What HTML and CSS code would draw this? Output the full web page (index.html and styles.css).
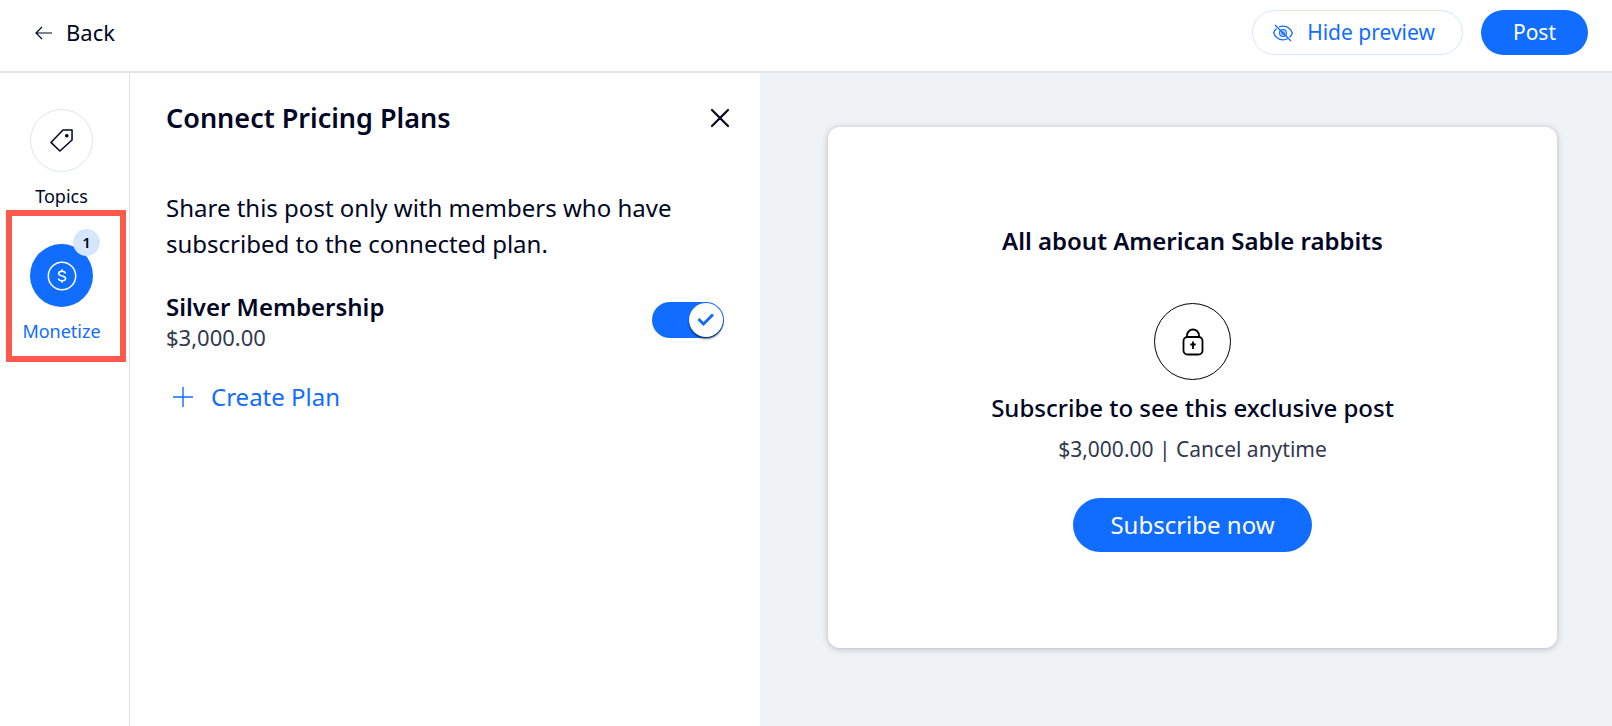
FILE: index.html
```html
<!DOCTYPE html>
<html lang="en">
<head>
    <meta charset="UTF-8">
    <meta name="viewport" content="width=device-width, initial-scale=1.0">
    <title>Connect Pricing Plans</title>
    <link rel="stylesheet" href="styles.css">
</head>
<body>
    <header class="topbar">
        <a class="back" href="#">
            <svg width="18" height="14" viewBox="0 0 18 14" fill="none" stroke="currentColor" stroke-width="1.2"><path d="M17 7H1.5M7 1L1 7l6 6"/></svg>
            <span>Back</span>
        </a>
        <div class="actions">
            <button class="btn outline" type="button">
                <svg width="20" height="18" viewBox="0 0 20 18" fill="none" stroke="currentColor" stroke-width="1.3"><path d="M3.500 4.500C2 5.800 1 7.500.7 9c1 3.500 4.600 6.800 9.300 6.800 1.800 0 3.500-.5 4.900-1.300M6.200 2.900C7.400 2.400 8.600 2.200 10 2.200c4.700 0 8.300 3.300 9.300 6.800-.4 1.500-1.400 3.100-2.800 4.300"/><circle cx="10" cy="9" r="3.400"/><circle cx="10" cy="9" r="1.200"/><path d="M2 1l16 16"/></svg>
                <span>Hide preview</span>
            </button>
            <button class="btn primary" type="button"><span>Post</span></button>
        </div>
    </header>

    <div class="content">
        <nav class="sidebar">
            <button class="tab" type="button">
                <span class="tab-icon">
                    <svg width="23" height="23" viewBox="0 0 24 24" fill="none" stroke="currentColor" stroke-width="1.6" stroke-linejoin="round"><path d="M13.500 1H23v10.500L10.300 23 1 14z"/><circle cx="17.500" cy="7" r="1.100" fill="currentColor"/></svg>
                </span>
                Topics
            </button>
            <button class="tab active" type="button">
                <span class="tab-icon">
                    <svg width="30" height="30" viewBox="0 0 30 30" fill="none" stroke="currentColor" stroke-width="1.500"><circle cx="15" cy="15" r="13.700"/><path d="M18.500 12.400c-.3-1.300-1.600-2.100-3.500-2.100s-3.400.8-3.400 2.300c0 3.300 7 1.500 7 4.900 0 1.500-1.600 2.300-3.600 2.300-2 0-3.400-.9-3.600-2.300M15 8.300v2M15 19.800v2"/></svg>
                    <span class="badge">1</span>
                </span>
                Monetize
            </button>
        </nav>

        <main class="panel">
            <div class="panel-head">
                <h1>Connect Pricing Plans</h1>
                <button class="close" type="button" aria-label="Close">
                    <svg width="20" height="20" viewBox="0 0 20 20" fill="none" stroke="currentColor" stroke-width="2.200" stroke-linecap="round"><path d="M2 2l16 16M18 2L2 18"/></svg>
                </button>
            </div>
            <p class="intro">Share this post only with members who have subscribed to the connected plan.</p>
            <div class="plan">
                <label for="silver">
                    <span class="plan-name">Silver Membership</span>
                    <span class="plan-price">$3,000.00</span>
                </label>
                <span class="switch">
                    <input type="checkbox" id="silver" checked>
                    <svg class="knob" width="34" height="34" viewBox="0 0 34 34" fill="none" stroke="currentColor" stroke-width="3"><path d="M9.500 16l5 5L24 11.500"/></svg>
                </span>
            </div>
            <button class="create" type="button">
                <svg width="20" height="20" viewBox="0 0 20 20" fill="none" stroke="currentColor" stroke-width="1.400"><path d="M10 0v20M0 10h20"/></svg>
                Create Plan
            </button>
        </main>

        <section class="preview">
            <article class="card">
                <h2>All about American Sable rabbits</h2>
                <div class="lock">
                    <svg width="22" height="28" viewBox="0 0 22 28" fill="none" stroke="currentColor" stroke-width="1.800"><rect x="1.500" y="9" width="19" height="17.500" rx="4"/><path d="M5 9V7.500a6 6 0 0 1 12 0V9M11 13.500v7.500M8.300 16.500h5.400"/></svg>
                </div>
                <h3>Subscribe to see this exclusive post</h3>
                <p class="terms">$3,000.00 | Cancel anytime</p>
                <button class="subscribe" type="button">Subscribe now</button>
            </article>
        </section>
    </div>
</body>
</html>
```
FILE: styles.css
```css
* {
    box-sizing: border-box;
}

body {
    margin: 0;
    min-height: 100vh;
    display: flex;
    flex-direction: column;
    font-family: "Noto Sans", sans-serif;
    font-size: 24px;
    color: #000624;
    background-color: white;
}

h1, h2, h3, p {
    margin: 0;
}

button {
    font: inherit;
    color: inherit;
    background: none;
    border: none;
    padding: 0;
    cursor: pointer;
}

svg {
    display: block;
    flex: none;
}

/* Top bar */
.topbar {
    display: flex;
    align-items: flex-start;
    justify-content: space-between;
    padding: 10px 24px 16px 35px;
    border-bottom: 2px solid #dfe5eb;
}

.back {
    display: flex;
    align-items: center;
    gap: 13px;
    height: 45px;
    font-size: 22px;
    color: inherit;
    text-decoration: none;
}

.actions {
    display: flex;
    gap: 18px;
}

.btn {
    display: flex;
    align-items: center;
    gap: 14px;
    height: 45px;
    border-radius: 23px;
    font-size: 21px;
}

.back span,
.btn span {
    padding-bottom: 1px;
}

.outline {
    padding: 0 27px 0 20px;
    border: 1px solid #d6e6fe;
    color: #116dff;
}

.primary {
    padding: 0 32px;
    background-color: #116dff;
    color: white;
}

.content {
    display: flex;
    flex: 1;
}

/* Sidebar */
.sidebar {
    display: flex;
    flex-direction: column;
    align-items: flex-start;
    width: 130px;
    padding: 0 6px;
    border-right: 1px solid #dfe0e3;
}

.tab {
    display: flex;
    flex-direction: column;
    align-items: center;
    gap: 11px;
    width: 120px;
    height: 137px;
    padding: 36px 9px 0 0;
    font-size: 18px;
    line-height: 26px;
}

.tab-icon {
    position: relative;
    display: flex;
    align-items: center;
    justify-content: center;
    width: 63px;
    height: 63px;
    border: 1px solid #dfe5eb;
    border-radius: 50%;
}

.tab.active {
    height: 152px;
    padding: 28px 9px 0 0;
    border: 6px solid #ff594d;
    color: #116dff;
}

.active .tab-icon {
    border: none;
    background-color: #116dff;
    color: white;
}

.badge {
    position: absolute;
    top: -15px;
    right: -7px;
    width: 27px;
    height: 27px;
    border-radius: 50%;
    background-color: #d6e6fe;
    color: #000624;
    font-size: 15px;
    font-weight: 600;
    line-height: 27px;
}

/* Pricing plans */
.panel {
    width: 630px;
    padding: 27px 30px 27px 36px;
}

.panel-head {
    display: flex;
    align-items: center;
    justify-content: space-between;
}

h1 {
    font-size: 27px;
    line-height: 36px;
    font-weight: 600;
}

.intro {
    margin-top: 54px;
    line-height: 36px;
    padding-right: 30px;
}

.plan {
    display: flex;
    align-items: center;
    justify-content: space-between;
    margin: 30px 6px 0 0;
}

.plan-name,
.plan-price {
    display: block;
    line-height: 30px;
}

.plan-name {
    font-weight: 600;
}

.plan-price {
    font-size: 22px;
    color: #33384f;
}

.switch {
    position: relative;
    display: flex;
    margin-top: -4px;
}

.switch input {
    appearance: none;
    width: 72px;
    height: 36px;
    margin: 0;
    border-radius: 18px;
    background-color: #116dff;
}

.knob {
    position: absolute;
    top: 1px;
    right: 1px;
    border-radius: 50%;
    background-color: white;
    color: #116dff;
    box-shadow: 0 2px 2px rgba(0, 6, 36, 0.6);
    pointer-events: none;
}

.create {
    display: flex;
    align-items: center;
    gap: 18px;
    margin: 27px 0 0 7px;
    line-height: 36px;
    color: #116dff;
}

/* Preview */
.preview {
    flex: 1;
    padding: 54px 55px 77px 68px;
    background-color: #eff3f6;
}

.card {
    display: flex;
    flex-direction: column;
    align-items: center;
    padding: 96px 24px;
    border-radius: 12px;
    background-color: white;
    box-shadow: 0 1px 6px rgba(0, 6, 36, 0.25);
}

h2 {
    font-size: 24px;
    line-height: 36px;
    font-weight: 600;
}

.lock {
    display: flex;
    align-items: center;
    justify-content: center;
    width: 77px;
    height: 77px;
    margin-top: 44px;
    border: 1px solid black;
    border-radius: 50%;
    color: black;
}

h3 {
    margin-top: 10px;
    font-size: 24px;
    line-height: 36px;
    font-weight: 500;
}

.terms {
    margin-top: 8px;
    font-size: 21px;
    line-height: 30px;
    color: #33384f;
}

.subscribe {
    height: 54px;
    margin-top: 34px;
    padding: 0 37px 1px;
    border-radius: 27px;
    background-color: #116dff;
    color: white;
}
```
